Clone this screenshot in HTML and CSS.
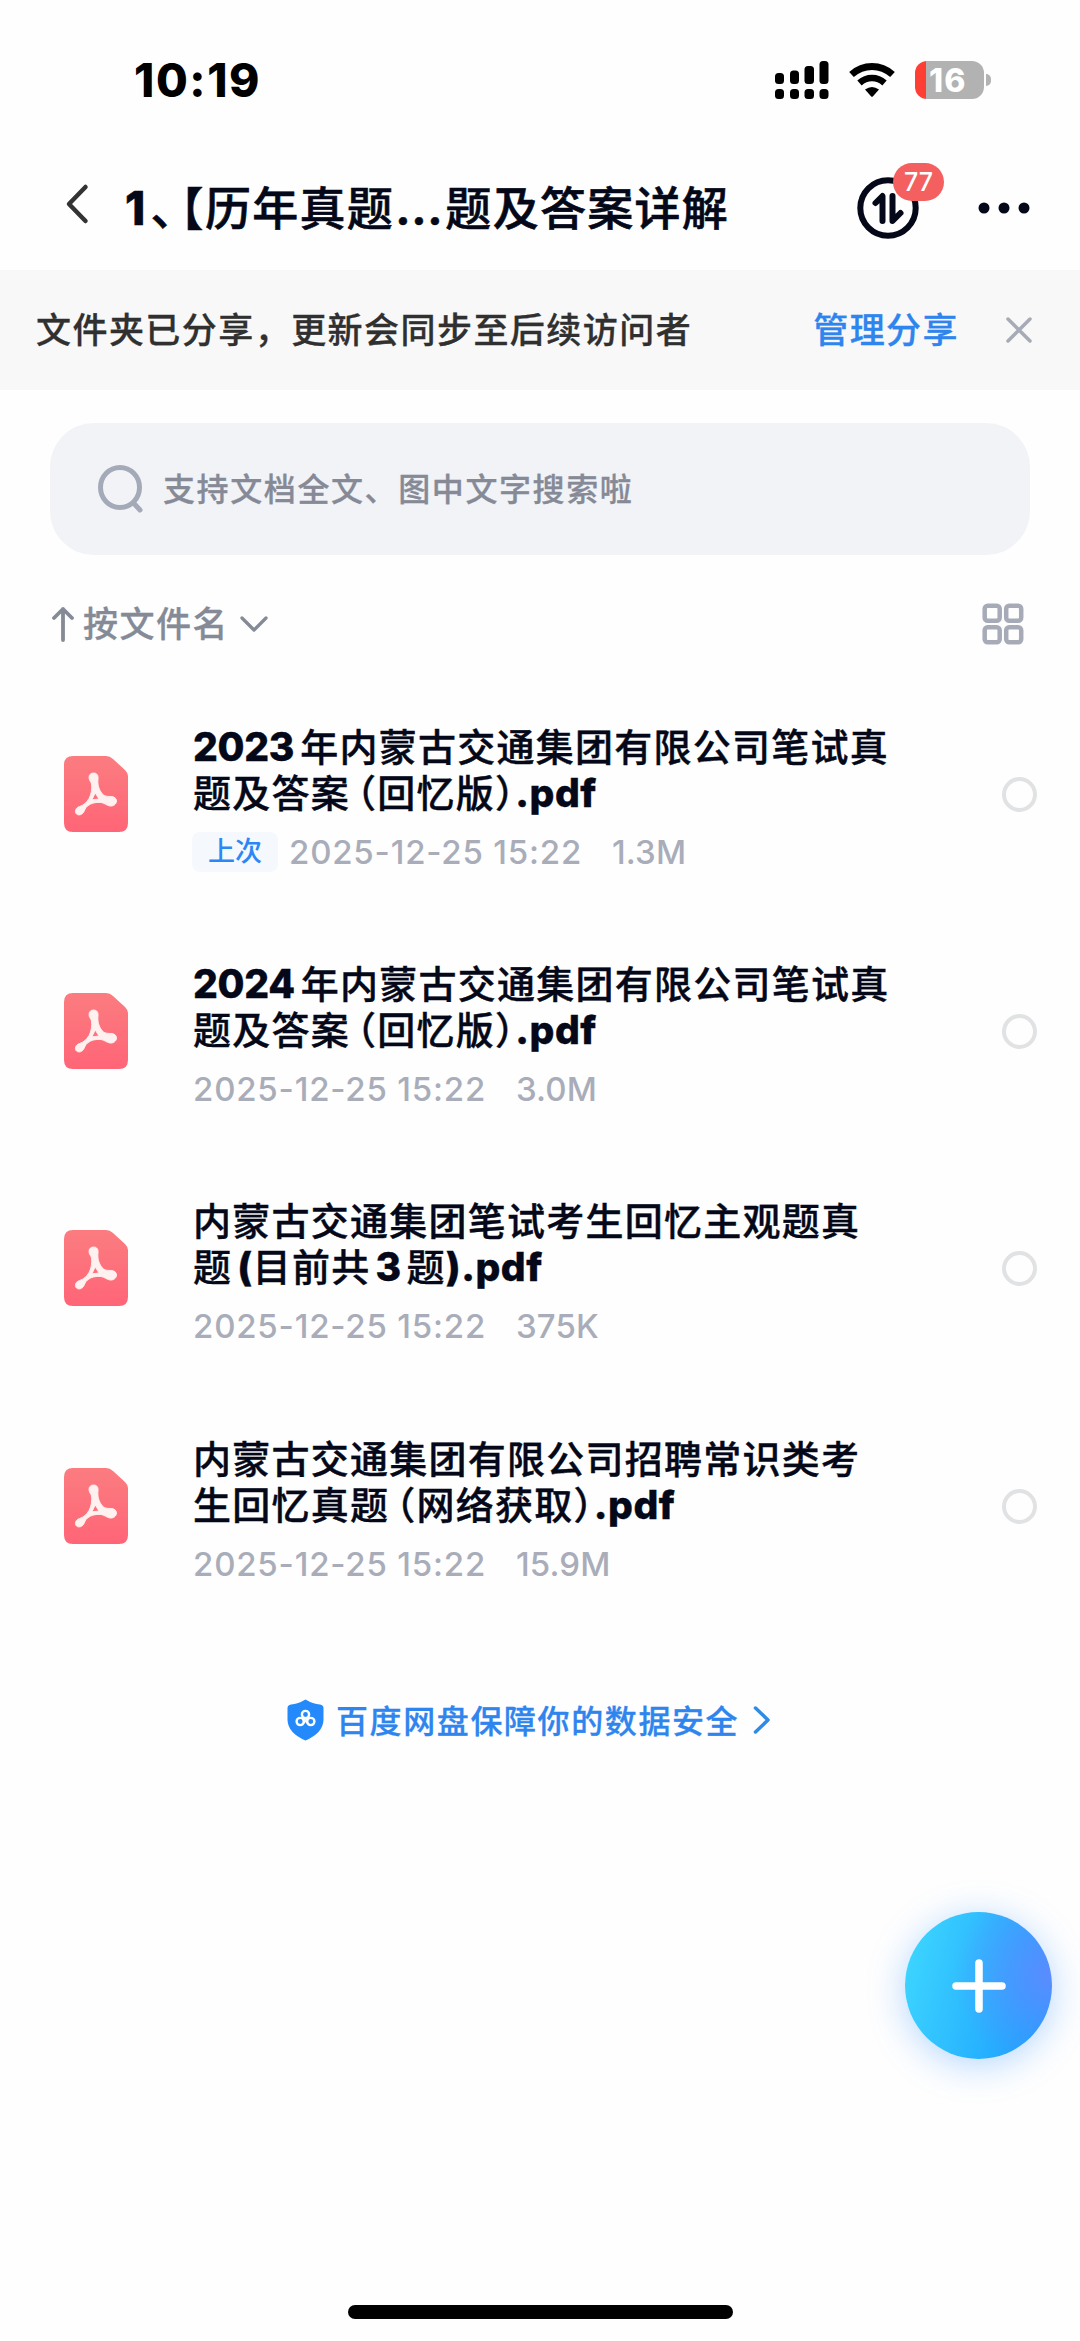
FILE: index.html
```html
<!DOCTYPE html>
<html lang="zh-CN">
<head>
    <meta charset="UTF-8">
    <meta name="viewport" content="width=device-width, initial-scale=1.0">
    <title>百度网盘</title>
    <link rel="stylesheet" href="styles.css">
</head>
<body>
    <!-- shared icons -->
    <svg class="defs" width="0" height="0">
        <defs>
            <linearGradient id="pdf-bg" x1="0" y1="0" x2="0" y2="1">
                <stop offset="0" stop-color="#fb7c80"/>
                <stop offset="1" stop-color="#ff6577"/>
            </linearGradient>
            <symbol id="pdf" viewBox="0 0 64 76">
                <path fill="url(#pdf-bg)" d="M9 0H42Q46 0 49 3L61 14Q64 17 64 20V67Q64 76 55 76H9Q0 76 0 67V9Q0 0 9 0Z"/>
                <path fill="#fff1ef" stroke="#fff1ef" stroke-width="0.900" fill-rule="evenodd" d="M29.500 17C33 17 34.500 19.500 34 23C33.500 28 34.500 33 38 37.500C40 40 42.500 40.500 47 40.500C50.500 40.500 52.500 42.500 52.500 45C52.500 48 49.500 50.500 46 50C42.500 49.500 40.500 47 37 46.500C32 46 27 47 23.500 50C21 52 21 54.500 19 57C17 59.500 13.500 59.500 12 57.500C10.500 55 12 51.500 15.500 50.500C20 49 22.500 46.500 25 42.500C27.500 38 28 33 27.500 28C27 25.500 25 24.500 25 21.500C25 18.500 27 17 29.500 17ZM31.200 37L28 43.800L35 43Z"/>
            </symbol>
        </defs>
    </svg>

    <div class="app">
        <div class="status-bar">
            <span class="time">10:19</span>
            <div class="status-icons">
                <svg width="54" height="38" viewBox="0 0 54 38">
                    <rect x="0" y="12" width="9" height="11" rx="3.500"/>
                    <rect x="15" y="9.500" width="9" height="13.500" rx="3.500"/>
                    <rect x="29.500" y="5" width="9.500" height="18" rx="3.500"/>
                    <rect x="44.500" y="0" width="9" height="23" rx="3.500"/>
                    <rect x="0" y="28" width="9" height="10" rx="3.500"/>
                    <rect x="15" y="28" width="9" height="10" rx="3.500"/>
                    <rect x="29.500" y="28" width="9.500" height="10" rx="3.500"/>
                    <rect x="44.500" y="28" width="9" height="10" rx="3.500"/>
                </svg>
                <svg class="wifi" width="46" height="34" viewBox="0 0 46 34">
                    <path d="M2.500 11.500Q11.500 3.500 23 3.500T43.500 11.500" fill="none" stroke="#000" stroke-width="7"/>
                    <path d="M10.500 20Q16 15 23 15T35.500 20" fill="none" stroke="#000" stroke-width="6.500"/>
                    <path d="M16 26.500Q23 21.500 30 26.500L24 33.300Q23 34.300 22 33.300Z"/>
                </svg>
                <div class="battery"><span>16</span></div>
                <div class="battery-tip"></div>
            </div>
        </div>

        <div class="nav-bar">
            <svg class="back" width="24" height="42" viewBox="0 0 24 42">
                <path d="M20.500 4L4 21L20.500 38" fill="none" stroke="#333" stroke-width="4.500" stroke-linecap="round" stroke-linejoin="round"/>
            </svg>
            <h1 class="title"><b>1</b><span class="comma">、</span><span class="bracket">【</span>历年真题<b class="dots">...</b>题及答案详解</h1>
            <div class="transfer">
                <svg width="62" height="62" viewBox="0 0 62 62" fill="none" stroke="#040818" stroke-width="6">
                    <circle cx="31" cy="31" r="27.700"/>
                    <path d="M18.500 26L25.500 19V44M35.500 19V44L43.500 36" stroke-linecap="round" stroke-linejoin="round"/>
                </svg>
                <span class="badge">77</span>
            </div>
            <svg class="more" width="52" height="12" viewBox="0 0 52 12" fill="#040818">
                <circle cx="6" cy="6" r="5.500"/>
                <circle cx="26" cy="6" r="5.500"/>
                <circle cx="46" cy="6" r="5.500"/>
            </svg>
        </div>

        <div class="notice">
            <span class="notice-text">文件夹已分享，更新会同步至后续访问者</span>
            <a class="notice-link">管理分享</a>
            <svg width="26" height="26" viewBox="0 0 26 26">
                <path d="M2 2L24 24M24 2L2 24" stroke="#a7abb5" stroke-width="3.500" stroke-linecap="round"/>
            </svg>
        </div>

        <div class="search">
            <svg width="46" height="48" viewBox="0 0 46 48" fill="none" stroke="#a5aab9" stroke-width="5" stroke-linecap="round">
                <ellipse cx="23" cy="22.500" rx="19.500" ry="20"/>
                <path d="M36.500 38L43 45"/>
            </svg>
            <span>支持文档全文、图中文字搜索啦</span>
        </div>

        <div class="toolbar">
            <svg width="22" height="36" viewBox="0 0 22 36" fill="none" stroke="#858a97" stroke-width="3.800" stroke-linecap="round" stroke-linejoin="round">
                <path d="M11 34V3M2 12L11 3L20 12"/>
            </svg>
            <span class="sort">按文件名</span>
            <svg class="down" width="30" height="18" viewBox="0 0 30 18" fill="none" stroke="#858a97" stroke-width="3.300" stroke-linecap="round" stroke-linejoin="round">
                <path d="M3 3L15 15L27 3"/>
            </svg>
            <svg class="grid" width="42" height="42" viewBox="0 0 42 42" fill="none" stroke="#a7abb8" stroke-width="4.500">
                <rect x="2.700" y="2.700" width="15" height="15" rx="3"/>
                <rect x="24.200" y="2.700" width="15" height="15" rx="3"/>
                <rect x="2.700" y="24.200" width="15" height="15" rx="3"/>
                <rect x="24.200" y="24.200" width="15" height="15" rx="3"/>
            </svg>
        </div>

        <ul class="file-list">
            <li class="file">
                <svg class="file-icon" width="64" height="76"><use href="#pdf"/></svg>
                <div class="file-info">
                    <p class="name"><b class="year">2023</b>年内蒙古交通集团有限公司笔试真<br>题及答案<span class="open">（</span>回忆版<span class="close">）</span><b>.pdf</b></p>
                    <p class="meta"><span class="tag">上次</span><span class="date">2025-12-25 15:22</span><span class="size">1.3M</span></p>
                </div>
                <i class="radio"></i>
            </li>
            <li class="file">
                <svg class="file-icon" width="64" height="76"><use href="#pdf"/></svg>
                <div class="file-info">
                    <p class="name"><b class="year">2024</b>年内蒙古交通集团有限公司笔试真<br>题及答案<span class="open">（</span>回忆版<span class="close">）</span><b>.pdf</b></p>
                    <p class="meta"><span class="date">2025-12-25 15:22</span><span class="size">3.0M</span></p>
                </div>
                <i class="radio"></i>
            </li>
            <li class="file">
                <svg class="file-icon" width="64" height="76"><use href="#pdf"/></svg>
                <div class="file-info">
                    <p class="name">内蒙古交通集团笔试考生回忆主观题真<br>题<b class="gap">(</b>目前共<b class="num">3</b>题<b>).pdf</b></p>
                    <p class="meta"><span class="date">2025-12-25 15:22</span><span class="size">375K</span></p>
                </div>
                <i class="radio"></i>
            </li>
            <li class="file">
                <svg class="file-icon" width="64" height="76"><use href="#pdf"/></svg>
                <div class="file-info">
                    <p class="name">内蒙古交通集团有限公司招聘常识类考<br>生回忆真题<span class="open">（</span>网络获取<span class="close">）</span><b>.pdf</b></p>
                    <p class="meta"><span class="date">2025-12-25 15:22</span><span class="size">15.9M</span></p>
                </div>
                <i class="radio"></i>
            </li>
        </ul>

        <div class="safety">
            <svg width="37" height="42" viewBox="0 0 37 42">
                <path fill="#2489fb" d="M18.500 0.500Q26 5 33 5.500Q36.500 6 36.500 9V21Q36 34 18.500 41.500Q1 34 0.500 21V9Q0.500 6 4 5.500Q11 5 18.500 0.500Z"/>
                <g fill="none" stroke="#fff" stroke-width="2.400">
                    <circle cx="18.500" cy="15.500" r="3.600"/>
                    <circle cx="13.200" cy="22.500" r="3.600"/>
                    <circle cx="23.800" cy="22.500" r="3.600"/>
                    <path d="M16 18.500L21 25M21 18.500L16 25" stroke-width="1.600"/>
                </g>
            </svg>
            <span>百度网盘保障你的数据安全</span>
            <svg width="18" height="30" viewBox="0 0 18 30">
                <path d="M2.500 3L15 15L2.500 27" fill="none" stroke="#2f8be6" stroke-width="3.500" stroke-linecap="round" stroke-linejoin="round"/>
            </svg>
        </div>

        <div class="home-bar"></div>

        <button class="add">
            <svg width="54" height="54" viewBox="0 0 54 54">
                <path d="M27 4V50M4 27H50" stroke="#fff" stroke-width="7.500" stroke-linecap="round"/>
            </svg>
        </button>
    </div>
</body>
</html>
```
FILE: styles.css
```css
* {
    margin: 0;
    padding: 0;
    box-sizing: border-box;
}
body {
    background: #fefefe;
    font-family: Inter, "Noto Sans CJK SC", sans-serif;
    font-weight: 500;
    white-space: nowrap;
}
.defs {
    position: absolute;
}
svg {
    display: block;
    flex-shrink: 0;
}
.app {
    position: relative;
    width: 1080px;
    height: 2341px;
    display: flex;
    flex-direction: column;
    overflow: hidden;
}

/* status bar */
.status-bar {
    height: 144px;
    padding: 16px 89px 0 134px;
    display: flex;
    justify-content: space-between;
    align-items: center;
}
.time {
    font-size: 46px;
    font-weight: 800;
    letter-spacing: 1.6px;
    color: #000;
}
.status-icons {
    display: flex;
    align-items: center;
}
.wifi {
    margin: 0 20px;
}
.battery {
    width: 69px;
    height: 38px;
    padding-left: 14px;
    border-radius: 12px;
    background: linear-gradient(90deg, #ff3f34 11px, #b2b2b2 11px);
    color: #fff;
    font-size: 32px;
    font-weight: 800;
    line-height: 39px;
    letter-spacing: 1px;
}
.battery-tip {
    width: 5px;
    height: 12px;
    margin-left: 2px;
    border-radius: 0 5px 5px 0;
    background: #b2b2b2;
}

/* title bar */
.nav-bar {
    height: 126px;
    padding: 1px 50px 0 65px;
    display: flex;
    align-items: center;
}
.back {
    margin-top: -8px;
}
.title {
    margin-left: 36px;
    font-size: 46px;
    font-weight: 500;
    line-height: 60px;
    letter-spacing: 1.3px;
    color: #040818;
    -webkit-text-stroke: 0.6px #040818;
}
/* punctuation takes about half a cell */
.comma,
.bracket,
.open,
.close {
    font-feature-settings: "halt";
}
.comma {
    margin-left: 4px;
    letter-spacing: 0;
}
.bracket {
    margin-left: 7px;
}
.title .dots {
    margin: 0 2px 0 1px;
    font-weight: 700;
    letter-spacing: 0.7px;
}
.transfer {
    position: relative;
    margin-left: auto;
}
.badge {
    position: absolute;
    left: 36px;
    top: -14px;
    width: 51px;
    height: 38px;
    border-radius: 19px;
    background: #f3605f;
    color: #fff;
    font-size: 25px;
    line-height: 38px;
    text-align: center;
}
.more {
    margin-left: 59px;
}

/* share notice */
.notice {
    height: 120px;
    padding: 0 48px 0 36px;
    display: flex;
    align-items: center;
    background: #f8f8f8;
    font-size: 35px;
    letter-spacing: 1.45px;
}
.notice-text,
.notice-link,
.search span,
.sort,
.safety span {
    margin-top: -5px;
    -webkit-text-stroke: 0.3px currentColor;
}
.notice-text {
    color: #303030;
}
.notice-link {
    margin-left: auto;
    margin-right: 47px;
    color: #2f85ee;
}

/* search */
.search {
    height: 132px;
    margin: 33px 50px 0;
    padding-left: 47px;
    display: flex;
    align-items: center;
    gap: 20px;
    border-radius: 44px;
    background: #f1f3f7;
    color: #858a96;
    font-size: 32px;
    letter-spacing: 1.6px;
}

/* sort row */
.toolbar {
    height: 138px;
    padding: 0 56px 0 52px;
    display: flex;
    align-items: center;
    color: #858a97;
}
.sort {
    margin-left: 9px;
    font-size: 35px;
    letter-spacing: 1.5px;
}
.down {
    margin-left: 10px;
}
.grid {
    margin-left: auto;
}

/* files */
.file-list {
    margin-top: 1px;
    list-style: none;
}
.file {
    height: 237.2px;
    padding: 30px 43px 0 64px;
    display: flex;
    align-items: flex-start;
}
.file-icon {
    margin-top: 32px;
}
.file-info {
    margin-left: 65px;
}
.name {
    font-size: 38px;
    line-height: 46px;
    letter-spacing: 1.25px;
    color: #040818;
    -webkit-text-stroke: 0.4px #040818;
}
.name b {
    font-size: 39px;
    line-height: 1;
    letter-spacing: 0.5px;
}
.title b,
.name b {
    font-weight: 800;
}
.name .year {
    margin-right: 6px;
    letter-spacing: -0.3px;
}
.open {
    margin-left: 7px;
}
.gap {
    margin-left: 5px;
}
.num {
    margin: 0 5px 0 5px;
}
.meta {
    height: 40px;
    margin-top: 16px;
    display: flex;
    align-items: center;
    color: #a9adb9;
    font-size: 33px;
    letter-spacing: 0.8px;
}
.date {
    margin-right: 30px;
}
.size {
    letter-spacing: 0.1px;
}
.tag {
    width: 86px;
    height: 40px;
    margin-left: -1px;
    margin-right: 11px;
    border-radius: 8px;
    background: #f5f8fc;
    color: #2b87f5;
    font-size: 27px;
    line-height: 40px;
    letter-spacing: 0;
    text-align: center;
}
.radio {
    width: 35px;
    height: 35px;
    margin: 53px 0 0 auto;
    border: 4px solid #e0e2e4;
    border-radius: 50%;
}

/* footer */
.safety {
    margin: 56px 0 0 287px;
    display: flex;
    align-items: center;
    color: #2f85ee;
    font-size: 32px;
    letter-spacing: 1.6px;
}
.safety span {
    margin-top: -3px;
    margin-left: 12px;
    margin-right: 14px;
}
.home-bar {
    width: 385px;
    height: 14px;
    margin: auto auto 22px;
    border-radius: 7px;
    background: #000;
}
.add {
    position: absolute;
    left: 905px;
    top: 1912px;
    width: 147px;
    height: 147px;
    display: flex;
    justify-content: center;
    align-items: center;
    border: none;
    border-radius: 50%;
    background: radial-gradient(circle at 100% 42%, #5b8cff 0%, rgba(91, 140, 255, 0) 58%), linear-gradient(105deg, #3dd6ff 5%, #22a8ff 75%, #1c9bff 100%);
    box-shadow: 0 6px 36px rgba(60, 150, 255, 0.38);
}
```
